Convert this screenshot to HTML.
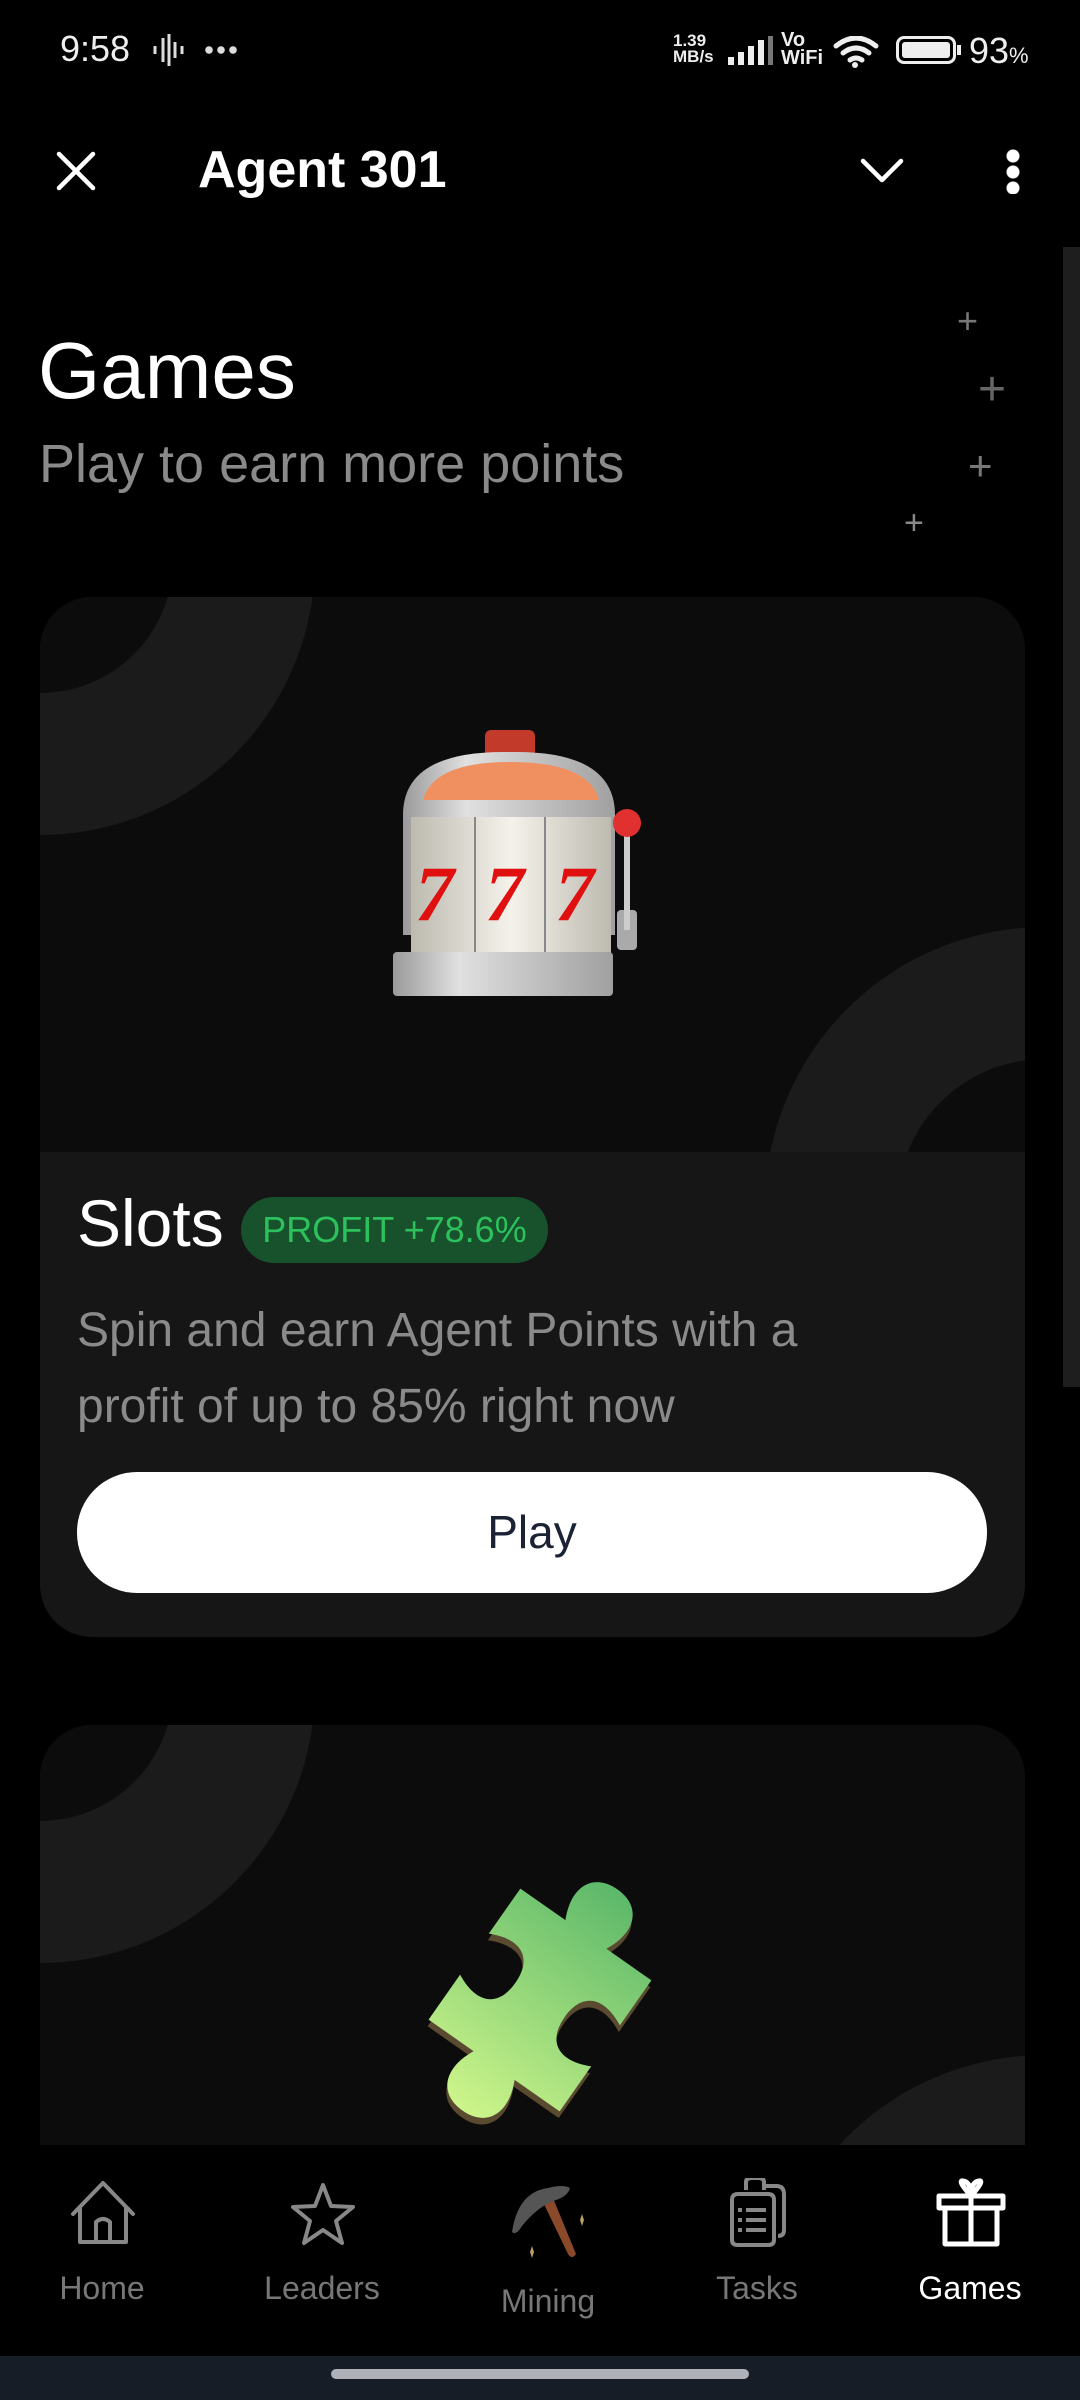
<!DOCTYPE html>
<html><head><meta charset="utf-8">
<style>
*{margin:0;padding:0;box-sizing:border-box}
html,body{width:1080px;height:2400px;overflow:hidden}
body{background:#000;position:relative;font-family:"Liberation Sans",sans-serif;color:#fff}
.abs{position:absolute}
.sb{font-size:36px;color:#eee}
.card{position:absolute;left:40px;width:985px;border-radius:52px;overflow:hidden;background:#161616}
.img{position:absolute;left:0;top:0;width:985px;height:555px;background:#0c0c0c;overflow:hidden}
.nav{position:absolute;top:2272px;font-size:32px;color:#777;text-align:center;width:200px;line-height:1}
</style></head><body>
<!-- status bar -->
<div class="abs sb" style="left:60px;top:28px;font-size:36px">9:58</div>
<svg class="abs" style="left:152px;top:34px" width="34" height="32" viewBox="0 0 34 32"><g stroke="#ddd" stroke-width="3"><line x1="3" y1="12" x2="3" y2="20"/><line x1="11" y1="4" x2="11" y2="28"/><line x1="17" y1="0" x2="17" y2="32"/><line x1="23" y1="8" x2="23" y2="24"/><line x1="30" y1="12" x2="30" y2="20"/></g></svg>
<div class="abs" style="left:203px;top:46px;width:36px;height:8px;background:radial-gradient(circle,#ddd 3.5px,transparent 4px) 0 0/12px 8px"></div>
<div class="abs" style="left:673px;top:33px;font-size:17px;font-weight:bold;line-height:16px;color:#eee">1.39<br>MB/s</div>
<svg class="abs" style="left:728px;top:36px" width="46" height="30"><g fill="#eee"><rect x="0" y="21" width="6" height="8"/><rect x="10" y="16" width="6" height="13"/><rect x="20" y="10" width="6" height="19"/><rect x="30" y="4" width="6" height="25"/><rect x="40" y="0" width="5" height="29" fill="#777"/></g></svg>
<div class="abs" style="left:781px;top:31px;font-size:20px;font-weight:bold;line-height:18px;color:#eee">Vo<br>WiFi</div>
<svg class="abs" style="left:833px;top:36px" width="48" height="32" viewBox="0 0 48 32"><g fill="none" stroke="#eee" stroke-width="5" stroke-linecap="round"><path d="M3 10 Q23 -6 43 10"/><path d="M10 17 Q23 7 36 17"/><path d="M17 24 Q23 20 29 24"/></g><circle cx="22" cy="29" r="3" fill="#eee"/></svg>
<div class="abs" style="left:896px;top:36px;width:60px;height:28px;border:3px solid #eee;border-radius:8px;padding:3px"><div style="width:100%;height:100%;background:#eee;border-radius:3px"></div></div>
<div class="abs" style="left:957px;top:45px;width:4px;height:10px;background:#eee"></div>
<div class="abs sb" style="left:969px;top:30px;font-size:36px">93<span style="font-size:22px">%</span></div>

<!-- header -->
<svg class="abs" style="left:56px;top:151px" width="40" height="40"><g stroke="#fff" stroke-width="4.5" stroke-linecap="round"><line x1="3" y1="3" x2="37" y2="37"/><line x1="37" y1="3" x2="3" y2="37"/></g></svg>
<div class="abs" style="left:198px;top:140px;font-size:52px;font-weight:bold">Agent 301</div>
<svg class="abs" style="left:860px;top:158px" width="44" height="26"><polyline points="3,3 22,22 41,3" fill="none" stroke="#fff" stroke-width="4.5" stroke-linecap="round" stroke-linejoin="round"/></svg>
<div class="abs" style="left:1006px;top:148px;width:14px;height:46px;background:radial-gradient(circle,#fff 6px,transparent 7px) 0 0/14px 16px"></div>
<div class="abs" style="left:1063px;top:247px;width:17px;height:1140px;background:#1e1e1e"></div>

<!-- title -->
<div class="abs" style="left:38px;top:326px;font-size:80px;line-height:90px">Games</div>
<div class="abs" style="left:39px;top:433px;font-size:54px;color:#8a8a8a">Play to earn more points</div>
<div class="abs" style="left:957px;top:300px;font-size:36px;color:#777">+</div>
<div class="abs" style="left:978px;top:362px;font-size:48px;color:#666">+</div>
<div class="abs" style="left:968px;top:442px;font-size:42px;color:#777">+</div>
<div class="abs" style="left:904px;top:504px;font-size:34px;color:#888">+</div>

<!-- card 1 -->
<div class="card" style="top:597px;height:1040px">
 <div class="img">
  <svg width="985" height="555" style="position:absolute;left:0;top:0">
   <circle cx="0" cy="-37" r="204" fill="none" stroke="#1b1b1b" stroke-width="142"/>
   <circle cx="1005" cy="610" r="214" fill="none" stroke="#1b1b1b" stroke-width="132"/>
  </svg>
  <svg style="position:absolute;left:353px;top:133px" width="280" height="270" viewBox="0 0 280 270">
   <defs><linearGradient id="met" x1="0" x2="1"><stop offset="0" stop-color="#9a9a9a"/><stop offset=".3" stop-color="#e0e0e0"/><stop offset="1" stop-color="#a0a0a0"/></linearGradient>
   <linearGradient id="reel" x1="0" x2="1"><stop offset="0" stop-color="#bdbbb0"/><stop offset=".5" stop-color="#f4f2ea"/><stop offset="1" stop-color="#bdbbb0"/></linearGradient></defs>
   <rect x="92" y="0" width="50" height="28" rx="6" fill="#c23a2a"/>
   <path d="M10 85 Q10 20 117 22 Q222 20 222 85 L222 205 L10 205 Z" fill="url(#met)"/>
   <path d="M30 70 Q40 32 117 32 Q196 32 206 70 Z" fill="#f09060"/>
   <rect x="18" y="87" width="200" height="140" fill="url(#reel)"/>
   <line x1="82" y1="87" x2="82" y2="227" stroke="#888" stroke-width="2"/>
   <line x1="152" y1="87" x2="152" y2="227" stroke="#888" stroke-width="2"/>
   <g font-family="Liberation Serif,serif" font-weight="bold" font-size="78" fill="#e01010" font-style="italic"><text x="22" y="190">7</text><text x="92" y="190">7</text><text x="162" y="190">7</text></g>
   <rect x="0" y="222" width="220" height="44" rx="4" fill="url(#met)"/>
   <rect x="224" y="180" width="20" height="40" rx="4" fill="#aaa"/>
   <rect x="231" y="100" width="6" height="100" fill="#ccc"/>
   <circle cx="234" cy="93" r="14" fill="#e03030"/>
  </svg>
 </div>
 <div class="abs" style="left:37px;top:586px;font-size:66px;line-height:80px">Slots</div>
 <div class="abs" style="left:201px;top:600px;width:307px;height:66px;border-radius:33px;background:#17522c;color:#2dc15d;font-size:36px;line-height:66px;text-align:center">PROFIT +78.6%</div>
 <div class="abs" style="left:37px;top:696px;font-size:48px;line-height:76px;color:#8a8a8a">Spin and earn Agent Points with a<br>profit of up to 85% right now</div>
 <div class="abs" style="left:37px;top:875px;width:910px;height:121px;border-radius:60px;background:#fff;color:#1b2233;font-size:46px;line-height:121px;text-align:center">Play</div>
</div>

<!-- card 2 -->
<div class="card" style="top:1725px;height:430px;border-radius:52px 52px 0 0">
 <div class="img" style="height:430px">
  <svg width="985" height="430" style="position:absolute;left:0;top:0">
   <circle cx="0" cy="-37" r="204" fill="none" stroke="#1b1b1b" stroke-width="142"/>
   <circle cx="1005" cy="610" r="214" fill="none" stroke="#1b1b1b" stroke-width="132"/>
  </svg>
  <svg style="position:absolute;left:340px;top:125px" width="320" height="300" viewBox="-160 -150 320 300">
   <defs><linearGradient id="pz" x1="0" y1="0" x2="0" y2="1"><stop offset="0" stop-color="#5cb86a"/><stop offset="1" stop-color="#cdf58a"/></linearGradient></defs>
   <g transform="rotate(35) scale(1.0)">
    <path d="M-80 -80 L-25 -80 C-40 -110 -30 -135 0 -135 C30 -135 40 -110 25 -80 L80 -80 L80 -25 C50 -40 30 -30 30 0 C30 30 50 40 80 25 L80 80 L25 80 C40 110 30 135 0 135 C-30 135 -40 110 -25 80 L-80 80 L-80 25 C-50 40 -30 30 -30 0 C-30 -30 -50 -40 -80 -25 Z" fill="#5a4a30" transform="translate(3,6)"/>
    <path d="M-80 -80 L-25 -80 C-40 -110 -30 -135 0 -135 C30 -135 40 -110 25 -80 L80 -80 L80 -25 C50 -40 30 -30 30 0 C30 30 50 40 80 25 L80 80 L25 80 C40 110 30 135 0 135 C-30 135 -40 110 -25 80 L-80 80 L-80 25 C-50 40 -30 30 -30 0 C-30 -30 -50 -40 -80 -25 Z" fill="url(#pz)"/>
   </g>
  </svg>
 </div>
</div>

<!-- nav -->
<div class="abs" style="left:0;top:2145px;width:1080px;height:211px;background:#000"></div>
<svg class="abs" style="left:68px;top:2180px" width="70" height="66" viewBox="0 0 70 66"><path d="M5 34 L35 3 L65 34 M12 27 L12 62 L58 62 L58 27 M28 62 L28 42 Q35 36 42 42 L42 62" fill="none" stroke="#888" stroke-width="4" stroke-linejoin="round" stroke-linecap="round"/></svg>
<svg class="abs" style="left:290px;top:2182px" width="66" height="64" viewBox="0 0 66 64"><path d="M33 3 L41 24 L63 25 L46 39 L52 61 L33 48 L14 61 L20 39 L3 25 L25 24 Z" fill="none" stroke="#888" stroke-width="4" stroke-linejoin="round"/></svg>
<svg class="abs" style="left:508px;top:2182px" width="80" height="80" viewBox="0 0 80 80"><path d="M35 20 L60 72 Q64 78 68 72 L45 16 Z" fill="#8a4a2a"/><path d="M4 50 Q10 10 40 6 Q55 2 62 6 Q60 14 48 18 Q30 24 14 44 Q8 54 4 50Z" fill="#555"/><path d="M72 38 l2 6 l2 -6 l-2 -6z M22 70 l2 6 l2 -6 l-2 -6z" fill="#b9a060"/></svg>
<svg class="abs" style="left:728px;top:2178px" width="60" height="70" viewBox="0 0 60 70"><path d="M18 12 L18 4 Q18 0 24 0 L30 0 Q36 0 36 4 L36 12 M36 8 L48 8 Q56 8 56 16 L56 52 Q56 58 50 58 M4 22 Q4 16 10 16 L40 16 Q46 16 46 22 L46 62 Q46 67 40 67 L10 67 Q4 67 4 62 Z" fill="none" stroke="#888" stroke-width="4"/><g fill="#888"><rect x="10" y="30" width="4" height="4"/><rect x="18" y="30" width="20" height="4"/><rect x="10" y="40" width="4" height="4"/><rect x="18" y="40" width="20" height="4"/><rect x="10" y="50" width="4" height="4"/><rect x="18" y="50" width="20" height="4"/></g></svg>
<svg class="abs" style="left:935px;top:2178px" width="72" height="70" viewBox="0 0 72 70"><path d="M4 18 L68 18 L68 30 L4 30 Z M10 30 L10 66 L62 66 L62 30 M36 18 L36 66 M36 18 Q22 2 28 3 Q36 4 36 18 Q36 4 44 3 Q50 2 36 18" fill="none" stroke="#fff" stroke-width="5" stroke-linejoin="round"/></svg>
<div class="nav" style="left:2px">Home</div>
<div class="nav" style="left:222px">Leaders</div>
<div class="nav" style="left:448px;top:2285px">Mining</div>
<div class="nav" style="left:657px">Tasks</div>
<div class="nav" style="left:870px;color:#fff">Games</div>

<div class="abs" style="left:0;top:2356px;width:1080px;height:44px;background:#161d26"></div>
<div class="abs" style="left:331px;top:2369px;width:418px;height:10px;border-radius:5px;background:#aeb2b8"></div>
</body></html>
